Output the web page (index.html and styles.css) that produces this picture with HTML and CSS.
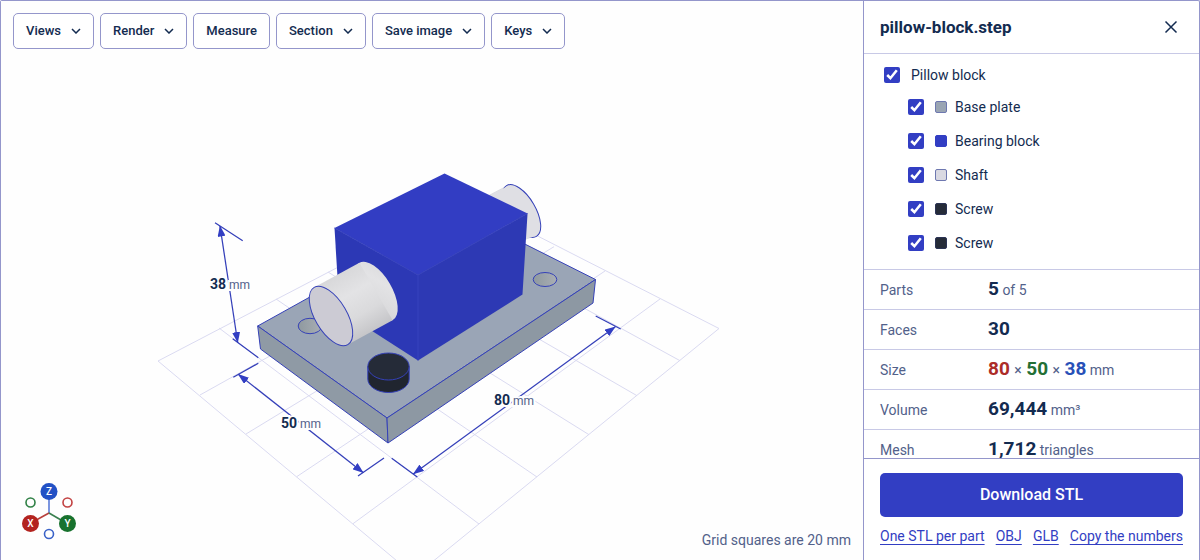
FILE: index.html
```html
<!DOCTYPE html>
<html lang="en">
<head>
<meta charset="utf-8">
<meta name="viewport" content="width=device-width, initial-scale=1">
<title>pillow-block.step</title>
<link rel="stylesheet" href="styles.css">
</head>
<body>
<div class="viewer">
  <main class="stage">
    <svg class="scene" viewBox="1 1 862 559" role="img" aria-label="Pillow block, 80 by 50 by 38 mm">
      <defs>
        <linearGradient id="shaft" gradientUnits="userSpaceOnUse" x1="337" y1="275" x2="370" y2="332">
          <stop offset="0" stop-color="#d8d8da"/><stop offset=".35" stop-color="#e3e3e5"/><stop offset=".7" stop-color="#dadadc"/><stop offset="1" stop-color="#c6c6c9"/>
        </linearGradient>
        <linearGradient id="hole" x1="0" x2="1"><stop offset="0" stop-color="#8f999f"/><stop offset="1" stop-color="#a9aeb4"/></linearGradient>
        <marker id="tip" viewBox="0 0 11 8" markerWidth="11" markerHeight="8" refX="10.500" refY="4" orient="auto-start-reverse" markerUnits="userSpaceOnUse"><path class="tip" d="M0 0 11 4 0 8Z"/></marker>
      </defs>
      <g class="grid">
        <path d="M158 361 467 200 719 328.500 415 576Z"/>
        <path d="M219 328 479 524M276 299 537 477M328 272 589 434.700M378 246 637 395.700M425 221 680 360.700"/>
        <path d="M200 395 510 222M246 434 554 246.700M296.700 476.700 605 271M353 523.700 660 299"/>
      </g>
      <g class="edges">
        <path fill="#9aa5b6" d="M257.700 326 462 212.500 595.500 279.500 387 418Z"/>
        <path fill="#8f9aa5" d="M257.700 326 387 418 388 443 260.500 349Z"/>
        <path fill="#8d98a3" d="M387 418 595.500 279.500 593 303 388 443Z"/>
        <ellipse fill="url(#hole)" cx="310" cy="326" rx="11.800" ry="7.700"/>
        <ellipse fill="url(#hole)" cx="545" cy="279.500" rx="11.800" ry="7"/>
      </g>
      <path fill="#dadbe0" d="M470 205 508 185 535 236 500 250Z"/>
      <ellipse fill="#dfdfe4" class="edge" cx="521.500" cy="211" rx="29.500" ry="14" transform="rotate(59.500 521.500 211)"/>
      <path fill="#dfdfe4" d="M488 196 508 186 533 237 500 245Z"/>
      <path fill="#2c38b5" d="M334.500 228 418 275V360.500L339.500 310Z"/>
      <path fill="#2d39b4" d="M418 275 527.500 213.500 522.500 294.500 418 360.500Z"/>
      <path fill="#323dc3" d="M334.500 228 444.500 173.500 527.500 213.500 418 275Z"/>
      <path class="seam" d="M334.500 228 418 275 527.500 213.500M418 275V360.500"/>
      <ellipse fill="url(#shaft)" cx="376" cy="291.500" rx="33.200" ry="15.900" transform="rotate(59.500 376 291.500)"/>
      <path fill="url(#shaft)" d="M314.400 287.300 359.400 262.800 392.600 320.200 347.600 344.700Z"/>
      <ellipse fill="#cccbd4" class="edge" cx="331" cy="316" rx="33.200" ry="15.900" transform="rotate(59.500 331 316)"/>
      <g class="edges">
        <path fill="#20252f" d="M367.800 366.500V379a20.700 13.500 0 0 0 41.400 0V366.500Z"/>
        <ellipse fill="#252b38" cx="388.500" cy="366.500" rx="20.700" ry="13.500"/>
      </g>
      <g class="dims">
        <path class="arrow" d="M220 226 237.700 342.500"/><path d="M215 222.700 242.700 240.700M232.700 338.700 258.300 357.700"/>
        <path class="arrow" d="M238.300 374.300 363.300 472.700"/><path d="M233.300 377.300 258.300 363.300M358 476 384 458"/>
        <path class="arrow" d="M413.300 474 615.300 326.700"/><path d="M391.700 458.300 417.300 477M595.700 316 620.700 329"/>
      </g>
      <g class="measures">
        <text x="210" y="289"><tspan class="size">38</tspan> mm</text>
        <text x="281" y="428"><tspan class="size">50</tspan> mm</text>
        <text x="494" y="405"><tspan class="size">80</tspan> mm</text>
      </g>
    </svg>

    <div class="toolbar" role="toolbar" aria-label="View tools">
      <button type="button">Views <svg viewBox="0 0 10 6"><path d="M1 1 5 5 9 1"/></svg></button>
      <button type="button">Render <svg viewBox="0 0 10 6"><path d="M1 1 5 5 9 1"/></svg></button>
      <button type="button">Measure</button>
      <button type="button">Section <svg viewBox="0 0 10 6"><path d="M1 1 5 5 9 1"/></svg></button>
      <button type="button">Save image <svg viewBox="0 0 10 6"><path d="M1 1 5 5 9 1"/></svg></button>
      <button type="button">Keys <svg viewBox="0 0 10 6"><path d="M1 1 5 5 9 1"/></svg></button>
    </div>

    <div class="legend">
      <svg class="axes" viewBox="0 0 56 58" role="img" aria-label="Axes">
        <path stroke="#5a7bd8" d="M28 31V10"/><path stroke="#b8403c" d="M28 31 9 41.500"/><path stroke="#3a8050" d="M28 31 46 41.500"/>
        <circle cx="9.500" cy="20.500" r="4.500" stroke="#2f8045"/><circle cx="46.500" cy="20.500" r="4.500" stroke="#c24141"/><circle cx="28" cy="52" r="4.500" stroke="#3a62c8"/>
        <circle class="ball" cx="28" cy="9.500" r="8.500" fill="#2251c5"/><circle class="ball" cx="9.500" cy="41.500" r="8.500" fill="#b3231f"/><circle class="ball" cx="46.500" cy="41.500" r="8.500" fill="#18722e"/>
        <text x="28" y="13">Z</text><text x="9.500" y="45">X</text><text x="46.500" y="45">Y</text>
      </svg>
      <p class="scale">Grid squares are 20 mm</p>
    </div>
  </main>

  <aside class="panel">
    <header class="panel-head">
      <h1>pillow-block.step</h1>
      <button type="button" class="close" aria-label="Close"><svg viewBox="0 0 12 12"><path d="M.5.5 11.500 11.500M11.500.5.5 11.500"/></svg></button>
    </header>
    <div class="panel-body">
      <ul class="tree">
        <li><label class="root"><input type="checkbox" checked>Pillow block</label>
          <ul>
            <li><label><input type="checkbox" checked><span class="swatch plate"></span><span>Base plate</span></label></li>
            <li><label><input type="checkbox" checked><span class="swatch block"></span><span>Bearing block</span></label></li>
            <li><label><input type="checkbox" checked><span class="swatch rod"></span><span>Shaft</span></label></li>
            <li><label><input type="checkbox" checked><span class="swatch screw"></span><span>Screw</span></label></li>
            <li><label><input type="checkbox" checked><span class="swatch screw"></span><span>Screw</span></label></li>
          </ul>
        </li>
      </ul>
      <dl class="facts">
        <div><dt>Parts</dt><dd><b>5</b> of 5</dd></div>
        <div><dt>Faces</dt><dd><b>30</b></dd></div>
        <div><dt>Size</dt><dd><b class="x">80</b> <i>×</i> <b class="y">50</b> <i>×</i> <b class="z">38</b> mm</dd></div>
        <div><dt>Volume</dt><dd><b>69,444</b> mm³</dd></div>
        <div><dt>Mesh</dt><dd><b>1,712</b> triangles</dd></div>
      </dl>
    </div>
    <footer class="panel-foot">
      <button type="button" class="download">Download STL</button>
      <nav class="links" aria-label="Other downloads">
        <a href="#parts">One STL per part</a><a href="#obj">OBJ</a><a href="#glb">GLB</a><a href="#copy">Copy the numbers</a>
      </nav>
    </footer>
  </aside>
</div>
</body>
</html>
```
FILE: styles.css
```css
:root {
  --ink: #132b50;
  --muted: #52618a;
  --blue: #323ec3;
  --line: #9496cb;
  --hair: #c8c9e6;
}
* { box-sizing: border-box; }
body {
  margin: 0;
  background: #fff;
  color: var(--ink);
  font: 14px/20px Roboto, "Noto Sans", sans-serif;
}
button { font: inherit; color: inherit; cursor: pointer; }
ul, dl, dd, h1, p { margin: 0; padding: 0; list-style: none; }

.viewer {
  display: grid;
  grid-template-columns: minmax(0, 1fr) 336px;
  height: 100vh;
  border: 1px solid var(--line);
  border-bottom: 0;
  border-radius: 2px 2px 0 0;
}

/* Drawing area: the toolbar and legend share the scene's cell */
.stage { display: grid; min-height: 0; background: #fefefe; }
.stage > * { grid-area: 1 / 1; }
.scene { width: 100%; height: 100%; min-height: 0; }
.grid { fill: none; stroke: #dadaf1; }
.edges > *, .edge { stroke: #3541b8; stroke-width: 1; stroke-linejoin: round; }
.seam { fill: none; stroke: #3742bd; stroke-width: 1; }
.dims { fill: none; stroke: #343fb9; stroke-width: 1.250; }
.arrow { marker-start: url(#tip); marker-end: url(#tip); }
.tip { fill: var(--blue); stroke: none; }
.measures {
  font-size: 12px;
  fill: var(--muted);
  stroke: #fefefe;
  stroke-width: 4px;
  paint-order: stroke;
}
.size { font-size: 14px; font-weight: 700; fill: var(--ink); }

.toolbar {
  display: flex;
  flex-wrap: wrap;
  gap: 6px;
  align-self: start;
  padding: 12px;
}
.toolbar button {
  display: flex;
  align-items: center;
  gap: 10px;
  height: 36px;
  padding: 0 12px;
  border: 1px solid var(--line);
  border-radius: 5px;
  background: #fff;
  font-size: 13px;
  font-weight: 500;
}
.toolbar svg { width: 10px; height: 6px; fill: none; stroke: currentColor; stroke-width: 1.500; }

.legend {
  display: flex;
  align-items: end;
  justify-content: space-between;
  align-self: end;
  padding: 0 12px 10px 20px;
}
.axes { width: 56px; height: 58px; margin-bottom: 10px; fill: none; stroke-width: 1.600; }
.axes .ball { stroke: none; }
.axes text { fill: #fff; font-size: 10px; font-weight: 500; text-anchor: middle; }
.scale { color: var(--muted); }

.panel {
  display: flex;
  flex-direction: column;
  min-height: 0;
  border-left: 1px solid var(--line);
}
.panel-head {
  display: flex;
  align-items: center;
  justify-content: space-between;
  flex: none;
  height: 53px;
  padding: 0 16px;
  border-bottom: 1px solid var(--hair);
}
h1 { font-size: 17px; font-weight: 700; }
.close { display: grid; place-items: center; width: 24px; height: 24px; padding: 0; border: 0; background: none; }
.close svg { width: 12px; height: 12px; fill: none; stroke: currentColor; stroke-width: 1.500; overflow: visible; }

.panel-body { flex: 1; min-height: 0; overflow: hidden; }
.tree { padding: 6px 20px 9px; }
.tree ul { padding-left: 24px; }
.tree label { display: flex; align-items: center; gap: 8px; height: 34px; }
.tree .root { gap: 11px; height: 30px; }
.tree input { width: 16px; height: 16px; margin: 0; accent-color: var(--blue); }
.tree ul input { margin-right: 3px; }
.swatch { width: 12px; height: 12px; border: 1px solid #6e78b0; border-radius: 2px; }
.plate { background: #9aa5b3; }
.block { background: var(--blue); border-color: var(--blue); }
.rod { background: #d9d9e2; }
.screw { background: #252b38; border-color: #2b3355; }

.facts div {
  display: flex;
  align-items: baseline;
  height: 40px;
  padding: 9px 16px 0;
  border-top: 1px solid var(--hair);
  color: var(--muted);
  line-height: 20px;
}
.facts dt { width: 108px; }
.facts b { color: var(--ink); font-size: 19px; }
.facts i { margin: 0 1px; font-style: normal; }
.facts .x { color: #ac2c28; }
.facts .y { color: #236f35; }
.facts .z { color: #2850b8; }

.panel-foot { flex: none; padding: 14px 16px 13px; border-top: 1px solid var(--line); }
.download {
  width: 100%;
  height: 44px;
  border: 0;
  border-radius: 5px;
  background: var(--blue);
  color: #fff;
  font-size: 16px;
  font-weight: 500;
}
.links { display: flex; justify-content: space-between; margin-top: 8px; line-height: 22px; }
.links a { color: var(--blue); text-decoration: underline; text-decoration-thickness: 1px; text-underline-offset: 3px; }
```
